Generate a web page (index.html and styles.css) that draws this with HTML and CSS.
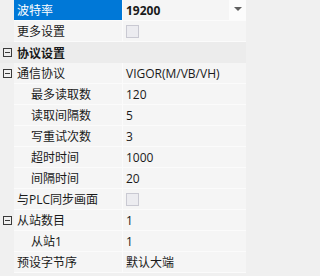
FILE: index.html
```html
<!DOCTYPE html>
<html>
<head>
<meta charset="utf-8">
<link rel="stylesheet" href="styles.css">
</head>
<body>
<div class="grid">
  <div class="row">
    <div class="gutter"></div>
    <div class="name selected">波特率</div>
    <div class="value combo"><span class="bold">19200</span><span class="drop"><span class="tri"></span></span></div>
  </div>
  <div class="row">
    <div class="gutter"></div>
    <div class="name">更多设置</div>
    <div class="value"><span class="check"></span></div>
  </div>
  <div class="row category">
    <div class="gutter"><span class="minus"></span></div>
    <div class="name">协议设置</div>
  </div>
  <div class="row">
    <div class="gutter"><span class="minus"></span></div>
    <div class="name">通信协议</div>
    <div class="value">VIGOR(M/VB/VH)</div>
  </div>
  <div class="row">
    <div class="gutter"></div>
    <div class="name sub">最多读取数</div>
    <div class="value">120</div>
  </div>
  <div class="row">
    <div class="gutter"></div>
    <div class="name sub">读取间隔数</div>
    <div class="value">5</div>
  </div>
  <div class="row">
    <div class="gutter"></div>
    <div class="name sub">写重试次数</div>
    <div class="value">3</div>
  </div>
  <div class="row">
    <div class="gutter"></div>
    <div class="name sub">超时时间</div>
    <div class="value">1000</div>
  </div>
  <div class="row">
    <div class="gutter"></div>
    <div class="name sub">间隔时间</div>
    <div class="value">20</div>
  </div>
  <div class="row">
    <div class="gutter"></div>
    <div class="name">与PLC同步画面</div>
    <div class="value"><span class="check"></span></div>
  </div>
  <div class="row">
    <div class="gutter"><span class="minus"></span></div>
    <div class="name">从站数目</div>
    <div class="value">1</div>
  </div>
  <div class="row">
    <div class="gutter"></div>
    <div class="name sub">从站1</div>
    <div class="value">1</div>
  </div>
  <div class="row">
    <div class="gutter"></div>
    <div class="name">预设字节序</div>
    <div class="value">默认大端</div>
  </div>
</div>
</body>
</html>
```

FILE: styles.css
```css
html, body {
  margin: 0;
  padding: 0;
  background: #f0f0f0;
}
body {
  width: 246px;
  height: 276px;
  overflow: hidden;
  font-family: "Open Sans", "Noto Sans CJK SC", sans-serif;
  font-size: 12px;
  color: #1a1a1a;
}
.grid {
  display: flex;
  flex-direction: column;
}
.row {
  display: grid;
  grid-template-columns: 14px 109px 1fr;
  height: 21px;
  box-sizing: border-box;
}
.gutter {
  background: #f0f0f0;
  display: flex;
  align-items: center;
  padding-left: 3px;
  height: 20px;
}
.name {
  background: #f5f5f5;
  border-right: 1px solid #fbfbfb;
  border-bottom: 1px solid #fbfbfb;
  padding-left: 3px;
  display: flex;
  align-items: center;
  white-space: nowrap;
  overflow: hidden;
}
.name.sub {
  padding-left: 17px;
}
.name.selected {
  background: #0078d7;
  color: #ffffff;
  border-bottom-color: #fbfbfb;
}
.value {
  background: #f5f5f5;
  border-bottom: 1px solid #fbfbfb;
  padding-left: 3px;
  display: flex;
  align-items: center;
  white-space: nowrap;
  overflow: hidden;
}
.row.category {
  grid-template-columns: 14px 1fr;
  background: #ececec;
}
.row.category .gutter,
.row.category .name {
  background: #ececec;
  border: none;
  font-weight: bold;
}
.bold {
  font-weight: bold;
  flex: 1;
}
.combo {
  padding-right: 0;
}
.drop {
  width: 17px;
  align-self: stretch;
  background: #fcfcfc;
  display: flex;
  align-items: center;
  justify-content: center;
}
.tri {
  width: 0;
  height: 0;
  border-left: 4px solid transparent;
  border-right: 4px solid transparent;
  border-top: 4px solid #606060;
  margin-top: -2px;
}
.check {
  width: 11px;
  height: 11px;
  border: 1px solid #c9c9d2;
  background: #ececf0;
}
.minus {
  width: 7px;
  height: 7px;
  border: 1px solid #3a3a3a;
  position: relative;
  background: transparent;
}
.minus::after {
  content: "";
  position: absolute;
  left: 1px;
  right: 1px;
  top: 3px;
  height: 1px;
  background: #3a3a3a;
}
```
